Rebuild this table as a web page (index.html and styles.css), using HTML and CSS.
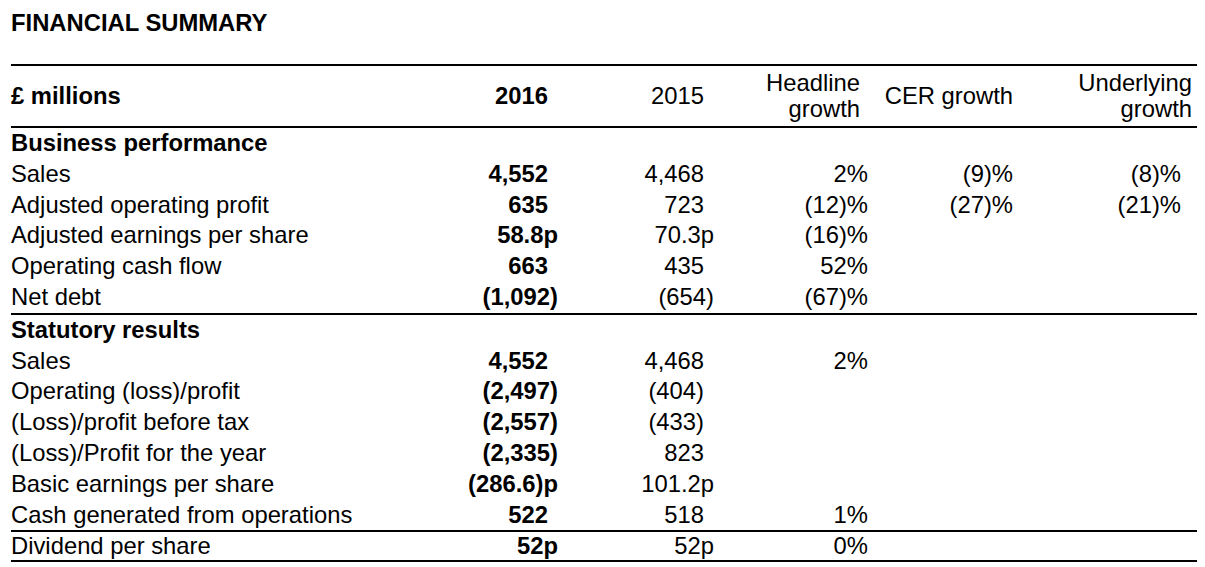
FILE: index.html
```html
<!DOCTYPE html>
<html lang="en">
<head>
<meta charset="utf-8">
<title>Financial summary</title>
<link rel="stylesheet" href="styles.css">
</head>
<body>
<main class="page">
  <h1 class="title">FINANCIAL SUMMARY</h1>
  <table class="fin">
    <colgroup>
      <col class="c-label">
      <col class="c-2016">
      <col class="c-2015">
      <col class="c-head">
      <col class="c-cer">
      <col class="c-und">
    </colgroup>
    <thead>
      <tr class="hdr">
        <th class="lbl b">£ millions</th>
        <th class="num b pad">2016</th>
        <th class="num pad">2015</th>
        <th class="num hl-h">Headline<br>growth</th>
        <th class="num">CER growth</th>
        <th class="num und-h">Underlying<br>growth</th>
      </tr>
    </thead>
    <tbody>
      <tr><td class="lbl b">Business performance</td><td></td><td></td><td></td><td></td><td></td></tr>
      <tr><td class="lbl">Sales</td><td class="num b pad">4,552</td><td class="num pad">4,468</td><td class="num">2%</td><td class="num">(9)%</td><td class="num und">(8)%</td></tr>
      <tr><td class="lbl">Adjusted operating profit</td><td class="num b pad">635</td><td class="num pad">723</td><td class="num">(12)%</td><td class="num">(27)%</td><td class="num und">(21)%</td></tr>
      <tr><td class="lbl">Adjusted earnings per share</td><td class="num b">58.8p</td><td class="num">70.3p</td><td class="num">(16)%</td><td></td><td></td></tr>
      <tr><td class="lbl">Operating cash flow</td><td class="num b pad">663</td><td class="num pad">435</td><td class="num">52%</td><td></td><td></td></tr>
      <tr class="rule"><td class="lbl">Net debt</td><td class="num b">(1,092)</td><td class="num">(654)</td><td class="num">(67)%</td><td></td><td></td></tr>
      <tr><td class="lbl b">Statutory results</td><td></td><td></td><td></td><td></td><td></td></tr>
      <tr><td class="lbl">Sales</td><td class="num b pad">4,552</td><td class="num pad">4,468</td><td class="num">2%</td><td></td><td></td></tr>
      <tr><td class="lbl">Operating (loss)/profit</td><td class="num b">(2,497)</td><td class="num pad">(404)</td><td></td><td></td><td></td></tr>
      <tr><td class="lbl">(Loss)/profit before tax</td><td class="num b">(2,557)</td><td class="num pad">(433)</td><td></td><td></td><td></td></tr>
      <tr><td class="lbl">(Loss)/Profit for the year</td><td class="num b">(2,335)</td><td class="num pad">823</td><td></td><td></td><td></td></tr>
      <tr><td class="lbl">Basic earnings per share</td><td class="num b">(286.6)p</td><td class="num">101.2p</td><td></td><td></td><td></td></tr>
      <tr class="rule"><td class="lbl">Cash generated from operations</td><td class="num b pad">522</td><td class="num pad">518</td><td class="num">1%</td><td></td><td></td></tr>
      <tr class="rule last"><td class="lbl">Dividend per share</td><td class="num b">52p</td><td class="num">52p</td><td class="num">0%</td><td></td><td></td></tr>
    </tbody>
  </table>
</main>
</body>
</html>
```

FILE: styles.css
```css
html, body {
  margin: 0;
  padding: 0;
  background: #fff;
}

body {
  font-family: "Liberation Sans", Arial, Helvetica, sans-serif;
  color: #000;
}

.page {
  padding: 9px 8px 0 11px;
}

.title {
  margin: 0;
  font-size: 23.8px;
  line-height: 28px;
  font-weight: bold;
}

.fin {
  margin-top: 27px;
  width: 1186px;
  table-layout: fixed;
  border-collapse: separate;
  border-spacing: 0;
  font-size: 23.8px;
}

.c-label { width: 447px; }
.c-2016 { width: 100px; }
.c-2015 { width: 156px; }
.c-head { width: 154px; }
.c-cer { width: 145px; }
.c-und { width: 184px; }

.fin th,
.fin td {
  padding: 0;
  white-space: nowrap;
  font-weight: normal;
}

.fin td {
  line-height: 30.8px;
  vertical-align: middle;
}

.hdr th {
  border-top: 2px solid #000;
  border-bottom: 2px solid #000;
  padding: 4px 0;
  line-height: 26px;
  vertical-align: middle;
}

.lbl { text-align: left; }
.num { text-align: right; }
.b { font-weight: bold !important; }

.pad { padding-right: 10px !important; }
.hl-h { padding-right: 8px !important; }
.und-h { padding-right: 5px !important; }
.und { padding-right: 16px !important; }

.rule td {
  border-bottom: 2px solid #000;
}

.last td {
  line-height: 28px;
}
```
